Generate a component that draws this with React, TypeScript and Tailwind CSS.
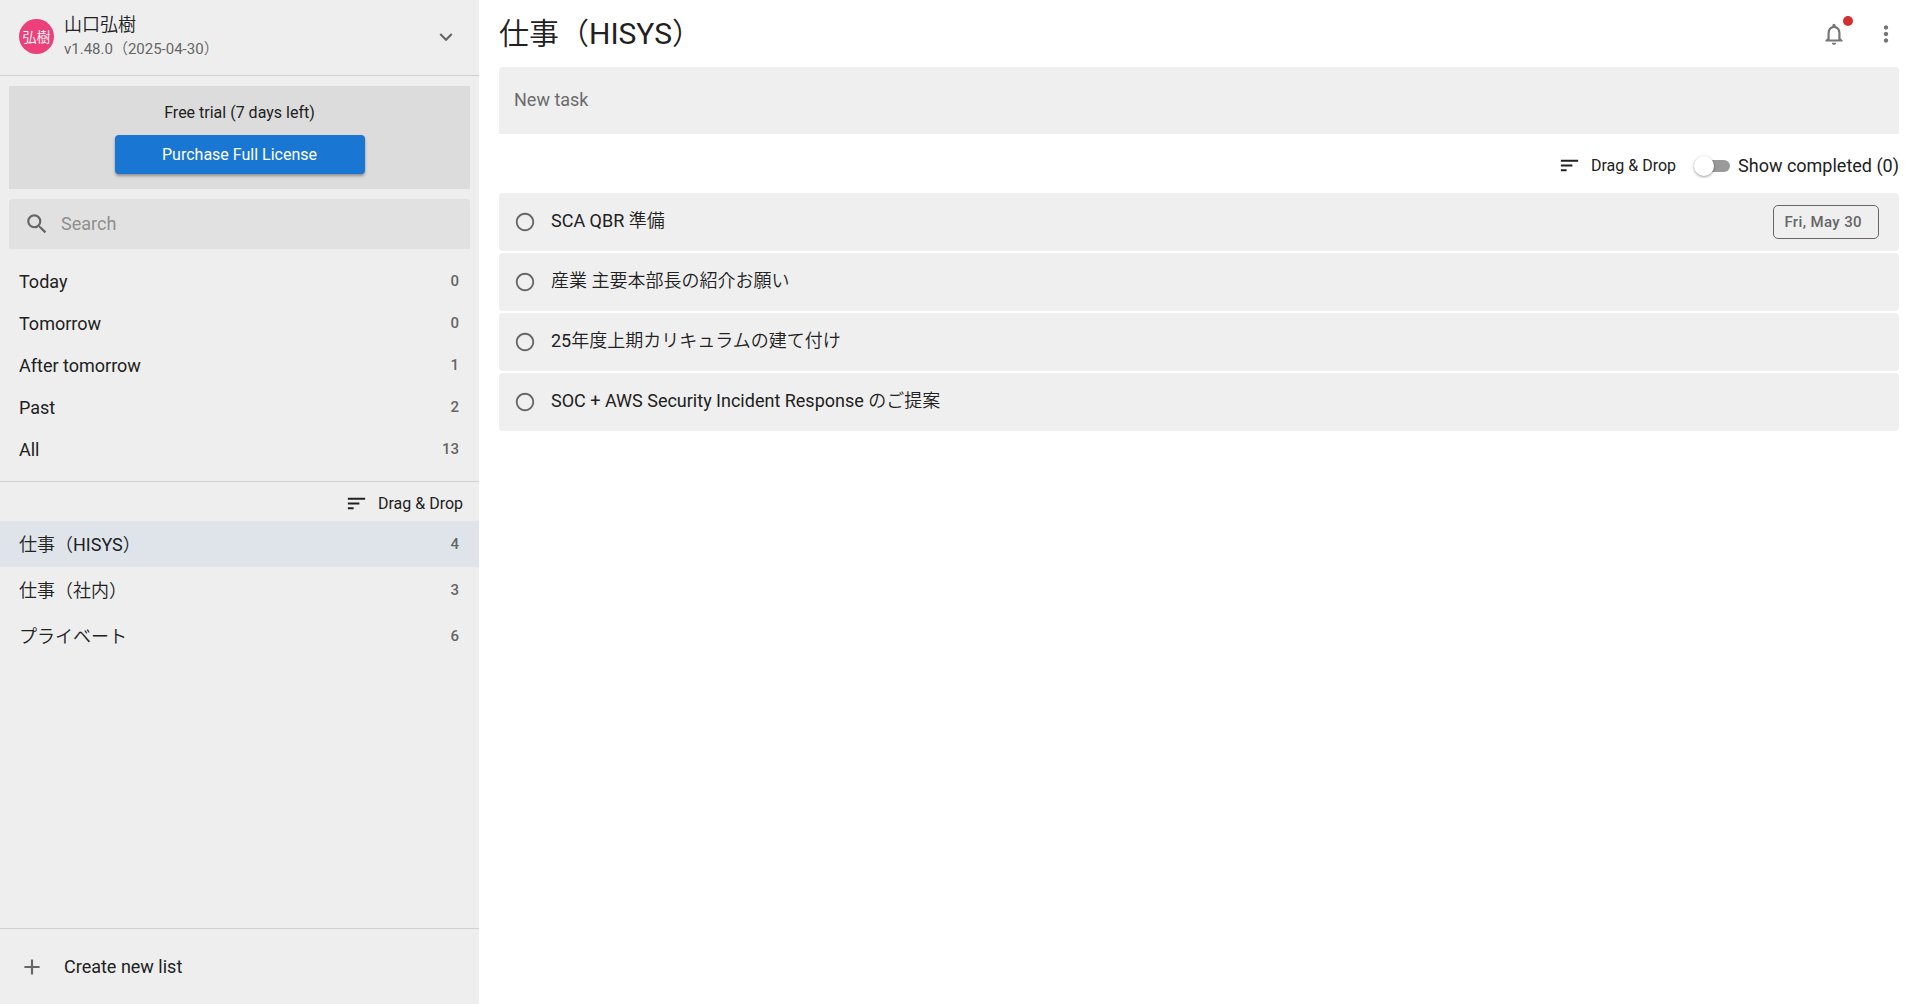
import { useState } from "react";
import {
  MdAdd,
  MdExpandMore,
  MdMoreVert,
  MdNotificationsNone,
  MdRadioButtonUnchecked,
  MdSearch,
  MdSort,
} from "react-icons/md";

const smartLists = [
  { name: "Today", count: 0 },
  { name: "Tomorrow", count: 0 },
  { name: "After tomorrow", count: 1 },
  { name: "Past", count: 2 },
  { name: "All", count: 13 },
];

const userLists = [
  { name: "仕事（HISYS）", count: 4 },
  { name: "仕事（社内）", count: 3 },
  { name: "プライベート", count: 6 },
];

const tasks = [
  { title: "SCA QBR 準備", due: "Fri, May 30" },
  { title: "産業 主要本部長の紹介お願い", due: null },
  { title: "25年度上期カリキュラムの建て付け", due: null },
  { title: "SOC + AWS Security Incident Response のご提案", due: null },
];

function SortButton() {
  return (
    <button type="button" className="flex items-center gap-2.5 text-base leading-6">
      <MdSort size={23} />
      Drag &amp; Drop
    </button>
  );
}

function Count({ value }: { value: number }) {
  return <span className="text-[15px] font-medium text-[#666666]">{value}</span>;
}

function Sidebar() {
  const [selected, setSelected] = useState(0);
  return (
    <aside className="flex w-1/4 min-w-[479px] shrink-0 flex-col bg-[#eeeeee]">
      <button
        type="button"
        className="flex items-center gap-2.5 border-b border-[#cfcfcf] pt-3 pr-5 pb-3.5 pl-[19px] text-left"
      >
        <span className="flex size-[35px] items-center justify-center rounded-full bg-[#ec407a] text-sm text-white">
          弘樹
        </span>
        <span className="flex grow flex-col">
          <span className="text-lg leading-[26px]">山口弘樹</span>
          <span className="text-[15px] leading-[23px] text-[#666666]">v1.48.0（2025-04-30）</span>
        </span>
        <MdExpandMore size={26} className="text-[#666666]" />
      </button>

      <section className="mx-[9px] mt-2.5 flex flex-col items-center bg-[#dcdcdc] px-4 pt-[15px] pb-[15px]">
        <p className="text-base leading-6">Free trial (7 days left)</p>
        <button
          type="button"
          className="mt-2.5 h-[39px] w-[250px] rounded bg-[#1976d2] text-base text-white shadow-[0_2px_3px_rgba(0,0,0,0.35)]"
        >
          Purchase Full License
        </button>
      </section>

      <label className="mx-[9px] mt-2.5 flex h-[50px] items-center gap-[11px] rounded-t bg-[#e1e1e1] px-[15px]">
        <MdSearch size={26} className="shrink-0 text-[#666666]" />
        <input
          type="search"
          aria-label="Search"
          placeholder="Search"
          className="w-full bg-transparent text-lg outline-none placeholder:text-[#8f8f8f]"
        />
      </label>

      <ul className="flex flex-col border-b border-[#cfcfcf] pt-3 pb-2.5">
        {smartLists.map((l) => (
          <li key={l.name}>
            <button type="button" className="flex h-[42px] w-full items-center justify-between pr-5 pl-[19px] text-lg">
              {l.name}
              <Count value={l.count} />
            </button>
          </li>
        ))}
      </ul>

      <div className="flex h-[39px] items-center justify-end pt-1 pr-4">
        <SortButton />
      </div>

      <ul className="flex grow flex-col">
        {userLists.map((l, i) => (
          <li key={l.name} className={i === selected ? "bg-[#dfe4eb]" : ""}>
            <button
              type="button"
              onClick={() => setSelected(i)}
              className="flex h-[46px] w-full items-center justify-between pt-0.5 pr-5 pl-[19px] text-lg"
            >
              {l.name}
              <Count value={l.count} />
            </button>
          </li>
        ))}
      </ul>

      <button
        type="button"
        className="flex h-[76px] items-center gap-[19px] border-t border-[#cfcfcf] pl-[19px] text-lg"
      >
        <MdAdd size={26} className="text-[#666666]" />
        Create new list
      </button>
    </aside>
  );
}

function Header() {
  return (
    <header className="flex h-[67px] items-center justify-between">
      <h1 className="text-[30px]">仕事（HISYS）</h1>
      <div className="flex items-center gap-[26px] text-[#757575]">
        <button type="button" aria-label="Notifications" className="relative">
          <MdNotificationsNone size={26} />
          <span className="absolute -top-[5px] -right-1.5 size-2.5 rounded-full bg-[#d32f2f]" />
        </button>
        <button type="button" aria-label="More options">
          <MdMoreVert size={26} />
        </button>
      </div>
    </header>
  );
}

export default function App() {
  return (
    <div className="flex min-h-screen bg-white font-['Roboto','Noto_Sans_CJK_JP_DemiLight','Noto_Sans_CJK_JP_Light','Noto_Sans_CJK_JP',sans-serif] text-[#212121]">
      <Sidebar />
      <main className="min-w-0 grow pr-3.5 pl-5">
        <Header />
        <input
          type="text"
          aria-label="New task"
          placeholder="New task"
          className="block h-[67px] w-full rounded-t bg-[#efefef] px-[15px] pb-0.5 text-lg outline-none placeholder:text-[#6b6b6b]"
        />
        <div className="flex h-[59px] items-center justify-end gap-[18px] pt-1">
          <SortButton />
          <label className="flex cursor-pointer items-center gap-2 text-lg">
            <input type="checkbox" role="switch" className="peer sr-only" />
            <span className="flex h-3 w-9 items-center rounded-full bg-linear-to-r from-transparent from-25% to-[#9a9a9a] to-25% before:size-5 before:rounded-full before:bg-white before:shadow-[0_1px_3px_rgba(0,0,0,0.4)] before:content-[''] peer-checked:justify-end" />
            Show completed (0)
          </label>
        </div>
        <ul className="flex flex-col gap-0.5">
          {tasks.map((t) => (
            <li key={t.title} className="flex h-[58px] items-center rounded bg-[#efefef] pr-5 pl-[15px]">
              <button type="button" aria-label={`Complete ${t.title}`} className="text-[#666666]">
                <MdRadioButtonUnchecked size={22} />
              </button>
              <span className="grow pb-0.5 pl-[15px] text-lg">{t.title}</span>
              {t.due && (
                <button
                  type="button"
                  className="h-[34px] rounded-[5px] border border-[#666666] pr-4 pl-2.5 text-[15px] font-medium tracking-wide text-[#666666]"
                >
                  {t.due}
                </button>
              )}
            </li>
          ))}
        </ul>
      </main>
    </div>
  );
}
